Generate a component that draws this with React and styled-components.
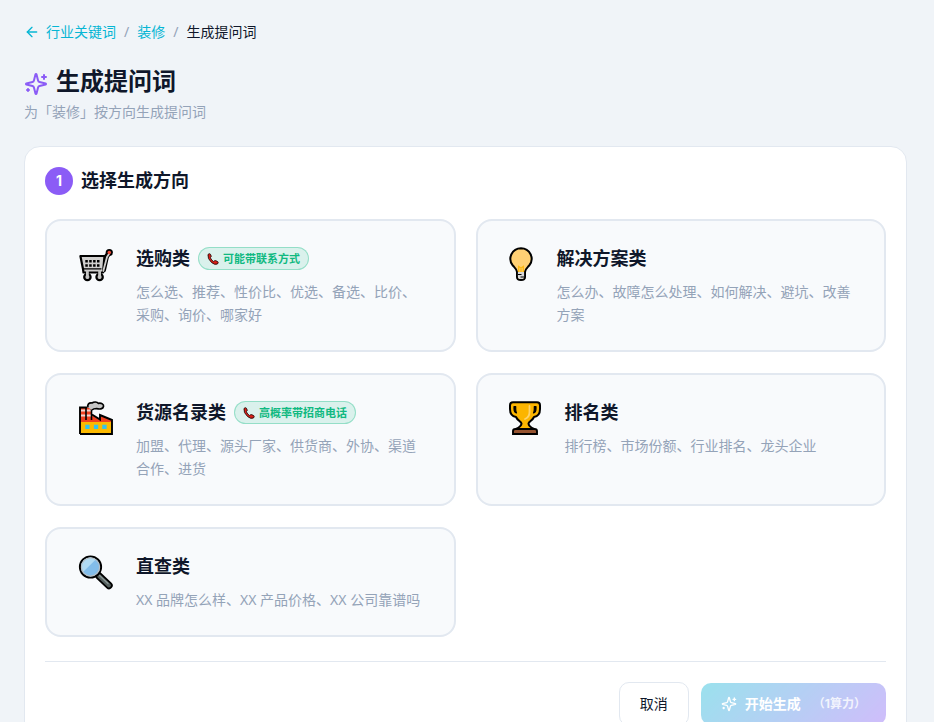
import React, { useState } from "react";
import styled, { createGlobalStyle } from "styled-components";
import { ArrowLeft } from "lucide-react";

function SparklesIcon({ size }) {
  return (
    <svg
      width={size}
      height={size}
      viewBox="0 0 24 24"
      fill="none"
      stroke="currentColor"
      strokeWidth="2"
      strokeLinecap="round"
      strokeLinejoin="round"
      aria-hidden="true"
    >
      <path d="M9.937 15.5A2 2 0 0 0 8.5 14.063l-6.135-1.582a.5.5 0 0 1 0-.962L8.5 9.936A2 2 0 0 0 9.937 8.5l1.582-6.135a.5.5 0 0 1 .963 0L14.063 8.5A2 2 0 0 0 15.5 9.937l6.135 1.581a.5.5 0 0 1 0 .964L15.5 14.063a2 2 0 0 0-1.437 1.437l-1.582 6.135a.5.5 0 0 1-.963 0z" />
      <path d="M20 3v4M22 5h-4M4 17v2M5 18H3" />
    </svg>
  );
}

function CartIcon() {
  return (
    <svg width="33" height="34" viewBox="0 0 33 34" overflow="visible" aria-hidden="true">
      <g strokeLinecap="round" strokeLinejoin="round">
        <path d="M24.500 23L27.500 9.500L30 6" fill="none" stroke="#000" strokeWidth="5" />
        <circle cx="30.300" cy="5.500" r="3.600" fill="#000" />
        <path d="M1.400 9H25.500L24 25.500H4.500L4 22Z" fill="#d0cfce" stroke="#000" strokeWidth="2.200" />
        <path d="M24.300 24L28 10L30 7" fill="none" stroke="#d0cfce" strokeWidth="1.800" />
        <path d="M4.500 21.800H22" stroke="#000" strokeWidth="1.300" />
        <circle cx="8.400" cy="30" r="3.200" fill="#b5b5b4" stroke="#000" strokeWidth="2.200" />
        <circle cx="20.600" cy="30" r="3.200" fill="#b5b5b4" stroke="#000" strokeWidth="2.200" />
        <path d="M8.400 24.500V30.500M20.600 24.500V30.500" stroke="#c6c6c5" strokeWidth="2.800" />
        <circle cx="30.300" cy="5.500" r="1.800" fill="#ea4a37" />
        <path
          d="M6.300 14.300H20.500M6.300 18.500H20.500"
          stroke="#000"
          strokeWidth="2.600"
          strokeDasharray="2.500 1.400"
          strokeLinecap="butt"
        />
      </g>
    </svg>
  );
}

function BulbIcon() {
  return (
    <svg width="23" height="34" viewBox="1 0 23 34" overflow="visible" aria-hidden="true">
      <path d="M12 1.200A10.600 10.600 0 0 0 3.800 18.500C6 21 8 22.500 8 25V30Q8 33 12 33Q16 33 16 30V25C16 22.500 18 21 20.200 18.500A10.600 10.600 0 0 0 12 1.200Z" fill="#ffd074" stroke="#000" strokeWidth="2" />
      <path d="M8.900 25H15.100V30Q15 32 12 32Q9 32 8.900 30Z" fill="#d8d8d8" />
      <path d="M9.700 25V19.500L12 21L14.300 19.500V25M12 20.500V25" fill="none" stroke="#fcb913" strokeWidth="1.400" />
      <path d="M9 27.500H12.500M11.500 30H15" stroke="#000" strokeWidth="1" />
    </svg>
  );
}

function FactoryIcon() {
  return (
    <svg width="33" height="34" viewBox="0 0 33 34" overflow="visible" aria-hidden="true">
      <path d="M1 33V6.500H13V14L21 19V14L33 19V33Z" fill="#f1401f" />
      <path d="M1 21H33V33H1Z" fill="#fcb900" />
      <path d="M2 9.500H12.500M2 14.500H12.500" stroke="#f6d5cf" strokeWidth="2" />
      <path d="M7 6V19M12.500 5V19" stroke="#000" strokeWidth="1.600" />
      <path d="M1 33V6.500H8M13 13.500L21 18.500V14L33 19V33H1" fill="none" stroke="#000" strokeWidth="1.900" strokeLinejoin="miter" />
      <path d="M9 6.500C8 3.500 10 1.500 13 2C15 .5 18 .8 19.500 2.300C22.500 1.800 25 3.200 24.500 5.500C24 8 20.500 8.500 17.500 7.500C15 7.500 14 8 13 9" fill="#c6c6c6" stroke="#000" strokeWidth="1.700" strokeLinejoin="round" />
      <path d="M6.300 23.700H10.600V28H6.300ZM14.900 23.700H19.200V28H14.900ZM23.300 23.700H27.600V28H23.300Z" fill="#35c4ee" />
    </svg>
  );
}

function TrophyIcon() {
  return (
    <svg width="31" height="34" viewBox="1 0 31 34" overflow="visible" aria-hidden="true">
      <path d="M4 1.300H28Q31 1.300 31 4.500V8C31 13 28 15.500 25 16C23.500 19.500 20 20.500 19.500 22.500C19.500 25 21 26 25 28H7C11 26 12.500 25 12.500 22.500C12 20.500 8.500 19.500 7 16C4 15.500 1 13 1 8V4.500Q1 1.300 4 1.300Z" fill="#fcb500" stroke="#000" strokeWidth="2" strokeLinejoin="round" />
      <path d="M6.700 5.500V8C6.700 10 7 11 7.500 12C5.500 11.500 5 9.500 5 7.500V5.500ZM25.300 5.500V8C25.300 10 25 11 24.500 12C26.500 11.500 27 9.500 27 7.500V5.500Z" fill="#000" stroke="#000" strokeWidth="1.200" strokeLinejoin="round" />
      <path d="M20.500 5V11C20.500 15 18.500 17 16 18" fill="none" stroke="#ffd36b" strokeWidth="1.800" strokeLinecap="round" />
      <path d="M4 33V30Q4 28 6.500 28H25.500Q28 28 28 30V33Z" fill="#965330" stroke="#000" strokeWidth="1.900" />
    </svg>
  );
}

function SearchIcon() {
  return (
    <svg width="33" height="34" viewBox="0 0 33 34" overflow="visible" aria-hidden="true">
      <path d="M20 21L30 30.500" stroke="#000" strokeWidth="7.400" strokeLinecap="round" />
      <path d="M20 21L30 30.500" stroke="#55605f" strokeWidth="3.800" strokeLinecap="round" />
      <path d="M20.500 20.500L29 28.500" stroke="#8b9695" strokeWidth="1.300" strokeLinecap="round" />
      <circle cx="11.500" cy="12" r="10.600" fill="#82bdea" stroke="#000" strokeWidth="2" />
      <path d="M4 17A9 9 0 0 1 16.800 4.500Z" fill="#b1dbf3" />
      <circle cx="11.500" cy="12" r="9.100" fill="none" stroke="#b7bfc4" strokeWidth="1.200" />
    </svg>
  );
}

function PhoneIcon() {
  return (
    <svg width="12" height="12" viewBox="0 0 12 12" aria-hidden="true">
      <path
        d="M1 1.500Q2.300 0 3.400 1.200L4.200 3Q4.400 4 3.300 4.700Q4.500 7.500 6.700 8.600Q7.500 7.400 8.500 7.600L10.700 8.600Q11.800 9.700 10.500 10.900Q8 12.400 4.500 9.500Q.2 5.500 1 1.500Z"
        fill="#dd1f17"
        stroke="#26100f"
        strokeWidth=".9"
        strokeLinejoin="round"
      />
    </svg>
  );
}

const directions = [
  {
    id: "buy",
    icon: <CartIcon />,
    name: "选购类",
    badge: "可能带联系方式",
    desc: "怎么选、推荐、性价比、优选、备选、比价、采购、询价、哪家好",
  },
  {
    id: "solution",
    icon: <BulbIcon />,
    name: "解决方案类",
    desc: "怎么办、故障怎么处理、如何解决、避坑、改善方案",
  },
  {
    id: "supply",
    icon: <FactoryIcon />,
    name: "货源名录类",
    badge: "高概率带招商电话",
    desc: "加盟、代理、源头厂家、供货商、外协、渠道合作、进货",
  },
  {
    id: "rank",
    icon: <TrophyIcon />,
    name: "排名类",
    desc: "排行榜、市场份额、行业排名、龙头企业",
  },
  {
    id: "lookup",
    icon: <SearchIcon />,
    name: "直查类",
    desc: "XX 品牌怎么样、XX 产品价格、XX 公司靠谱吗",
  },
];

function App() {
  const [selected, setSelected] = useState(null);

  return (
    <>
      <GlobalStyle />
      <Page>
        <Breadcrumb aria-label="breadcrumb">
          <BackLink href="#keywords">
            <ArrowLeft size={16} />
            行业关键词
          </BackLink>
          <Separator>/</Separator>
          <CrumbLink href="#keyword">装修</CrumbLink>
          <Separator>/</Separator>
          <span>生成提问词</span>
        </Breadcrumb>

        <Header>
          <h1>
            <SparklesIcon size={24} />
            生成提问词
          </h1>
          <p>为「装修」按方向生成提问词</p>
        </Header>

        <Panel>
          <StepTitle>
            <StepNumber>1</StepNumber>
            <h2>选择生成方向</h2>
          </StepTitle>

          <Grid>
            {directions.map((item) => (
              <Card
                key={item.id}
                type="button"
                $active={selected === item.id}
                aria-pressed={selected === item.id}
                onClick={() => setSelected(item.id)}
              >
                <CardIcon>{item.icon}</CardIcon>
                <CardBody>
                  <CardTitle>
                    {item.name}
                    {item.badge && (
                      <Badge>
                        <PhoneIcon />
                        {item.badge}
                      </Badge>
                    )}
                  </CardTitle>
                  <CardDesc>{item.desc}</CardDesc>
                </CardBody>
              </Card>
            ))}
          </Grid>

          <Footer>
            <CancelButton type="button" onClick={() => setSelected(null)}>
              取消
            </CancelButton>
            <SubmitButton type="button" disabled={!selected}>
              <SparklesIcon size={16} />
              开始生成
              <Cost>（1算力）</Cost>
            </SubmitButton>
          </Footer>
        </Panel>
      </Page>
    </>
  );
}

const GlobalStyle = createGlobalStyle`
  * {
    box-sizing: border-box;
  }
  body {
    margin: 0;
    background: #f0f4f8;
    color: #0f172a;
    font-family: "Noto Sans", "Noto Sans CJK SC", sans-serif;
    font-size: 14px;
    line-height: 22px;
  }
  h1, h2, p {
    margin: 0;
  }
  button {
    font-family: inherit;
    font-size: 14px;
    line-height: 22px;
    color: inherit;
    cursor: pointer;
  }
  svg {
    flex-shrink: 0;
  }
`;

const Page = styled.main`
  padding: 20px 27px 24px 24px;
`;

const Breadcrumb = styled.nav`
  display: flex;
  align-items: center;
  gap: 8px;
  line-height: 24px;
  margin-bottom: 20px;
`;

const CrumbLink = styled.a`
  color: #06b6d4;
  text-decoration: none;
`;

const BackLink = styled(CrumbLink)`
  display: flex;
  align-items: center;
  gap: 6px;
`;

const Separator = styled.span`
  color: #94a3b8;
`;

const Header = styled.header`
  margin-bottom: 24px;

  h1 {
    display: flex;
    align-items: center;
    gap: 8px;
    font-size: 24px;
    line-height: 34px;
    font-weight: 700;
  }

  svg {
    margin-top: 6px;
    color: #8b5cf6;
  }

  p {
    margin-top: 4px;
    line-height: 20px;
    color: #94a3b8;
  }
`;

const Panel = styled.section`
  background: #ffffff;
  border: 1px solid #e2e8f0;
  border-radius: 16px;
  padding: 20px;
`;

const StepTitle = styled.div`
  display: flex;
  align-items: flex-start;
  gap: 8px;
  margin-bottom: 24px;

  h2 {
    font-size: 18px;
    line-height: 27px;
    font-weight: 600;
  }
`;

const StepNumber = styled.span`
  display: flex;
  align-items: center;
  justify-content: center;
  width: 28px;
  height: 28px;
  border-radius: 50%;
  background: #8b5cf6;
  color: #ffffff;
  font-family: Inter, "Noto Sans", sans-serif;
  font-weight: 700;
`;

const Grid = styled.div`
  display: grid;
  grid-template-columns: repeat(2, 1fr);
  gap: 21px 20px;
  margin-bottom: 24px;
  @media only screen and (max-width: 618px) {
    grid-template-columns: 1fr;
  }
`;

const Card = styled.button`
  display: flex;
  align-items: flex-start;
  gap: 16px;
  padding: 24px;
  text-align: left;
  background: #f8fafc;
  border: 2px solid ${({ $active }) => ($active ? "#8b5cf6" : "#e2e8f0")};
  border-radius: 16px;
`;

const CardIcon = styled.span`
  display: flex;
  padding: 2px 8px 0;
`;

const CardBody = styled.span`
  flex: 1;
  min-width: 0;
`;

const CardTitle = styled.span`
  display: flex;
  align-items: center;
  gap: 8px;
  margin-bottom: 8px;
  font-size: 18px;
  line-height: 27px;
  font-weight: 600;
`;

const Badge = styled.span`
  display: flex;
  align-items: center;
  gap: 4px;
  padding: 0 8px;
  font-size: 11px;
  line-height: 21px;
  font-weight: 600;
  color: #10b981;
  background: rgba(16, 185, 129, 0.13);
  border: 1px solid rgba(16, 185, 129, 0.35);
  border-radius: 12px;
`;

const CardDesc = styled.span`
  display: block;
  line-height: 23px;
  color: #94a3b8;
`;

const Footer = styled.div`
  display: flex;
  align-items: center;
  justify-content: flex-end;
  gap: 12px;
  padding-top: 20px;
  border-top: 1px solid #e2e8f0;
`;

const CancelButton = styled.button`
  padding: 10px 20px;
  background: #ffffff;
  border: 1px solid #e2e8f0;
  border-radius: 10px;
`;

const SubmitButton = styled.button`
  display: flex;
  align-items: center;
  gap: 8px;
  padding: 10px 20px;
  color: #ffffff;
  font-weight: 700;
  background: linear-gradient(135deg, #06b6d4, #8b5cf6);
  border: none;
  border-radius: 10px;

  &:disabled {
    opacity: 0.4;
    cursor: not-allowed;
  }
`;

const Cost = styled.span`
  margin-left: 4px;
  font-family: Inter, "Noto Sans CJK SC", sans-serif;
  font-size: 12px;
  opacity: 0.8;
`;

export default App;
